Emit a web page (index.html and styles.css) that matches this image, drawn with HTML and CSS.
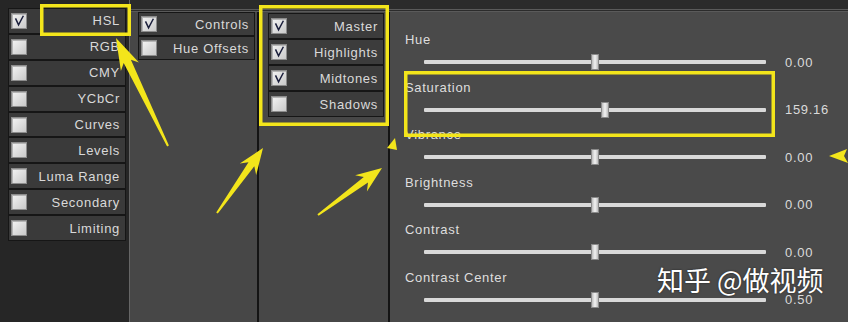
FILE: index.html
```html
<!DOCTYPE html>
<html lang="en">

<head>
  <meta charset="UTF-8">
  <meta name="viewport" content="width=device-width, initial-scale=1.0">
  <title>HSL</title>
  <link rel="stylesheet" href="styles.css">
</head>

<body>
  <div class="app">
    <div class="col col1">
      <div class="row"><span class="box checked"><svg viewBox="0 0 16 16"><path d="M4 5 L7.5 12.5 L13 2"/></svg></span><label>HSL</label></div>
      <div class="row"><span class="box"></span><label>RGB</label></div>
      <div class="row"><span class="box"></span><label>CMY</label></div>
      <div class="row"><span class="box"></span><label>YCbCr</label></div>
      <div class="row"><span class="box"></span><label>Curves</label></div>
      <div class="row"><span class="box"></span><label>Levels</label></div>
      <div class="row"><span class="box"></span><label>Luma Range</label></div>
      <div class="row"><span class="box"></span><label>Secondary</label></div>
      <div class="row"><span class="box"></span><label>Limiting</label></div>
    </div>

    <div class="main">
      <div class="topbar"></div>
      <div class="panes">
        <div class="col col2">
          <div class="row"><span class="box checked"><svg viewBox="0 0 16 16"><path d="M4 5 L7.5 12.5 L13 2"/></svg></span><label>Controls</label></div>
          <div class="row"><span class="box"></span><label>Hue Offsets</label></div>
        </div>

        <div class="col col3">
          <div class="row"><span class="box checked"><svg viewBox="0 0 16 16"><path d="M4 5 L7.5 12.5 L13 2"/></svg></span><label>Master</label></div>
          <div class="row"><span class="box checked"><svg viewBox="0 0 16 16"><path d="M4 5 L7.5 12.5 L13 2"/></svg></span><label>Highlights</label></div>
          <div class="row"><span class="box checked"><svg viewBox="0 0 16 16"><path d="M4 5 L7.5 12.5 L13 2"/></svg></span><label>Midtones</label></div>
          <div class="row"><span class="box"></span><label>Shadows</label></div>
        </div>

        <div class="col col4">
          <div class="slider">
            <div class="name">Hue</div>
            <div class="line"><div class="track"><span class="thumb" style="left: 49.7%"></span></div><span class="value">0.00</span></div>
          </div>
          <div class="slider">
            <div class="name">Saturation</div>
            <div class="line"><div class="track"><span class="thumb" style="left: 52.6%"></span></div><span class="value">159.16</span></div>
          </div>
          <div class="slider">
            <div class="name">Vibrance</div>
            <div class="line"><div class="track"><span class="thumb" style="left: 49.7%"></span></div><span class="value">0.00</span></div>
          </div>
          <div class="slider">
            <div class="name">Brightness</div>
            <div class="line"><div class="track"><span class="thumb" style="left: 49.7%"></span></div><span class="value">0.00</span></div>
          </div>
          <div class="slider">
            <div class="name">Contrast</div>
            <div class="line"><div class="track"><span class="thumb" style="left: 49.7%"></span></div><span class="value">0.00</span></div>
          </div>
          <div class="slider">
            <div class="name">Contrast Center</div>
            <div class="line"><div class="track"><span class="thumb" style="left: 49.7%"></span></div><span class="value">0.50</span></div>
          </div>
        </div>
      </div>
    </div>
  </div>

  <!-- yellow markup drawn over the screenshot -->
  <svg class="marks" viewBox="0 0 848 322">
    <rect x="41.75" y="5.75" width="87.5" height="28.5" />
    <rect x="260.75" y="6.75" width="126.5" height="117.5" />
    <rect x="405.75" y="72.75" width="367.5" height="62.5" />
    <polygon points="168.9,145.6 130.9,59.7 138.9,62.5 116,38 120.9,71.1 123.7,63.1 167.1,146.4" />
    <polygon points="217.8,213.6 254.3,166.3 256.2,175 263,148 239.8,163.4 248.5,162.3 216.2,212.4" />
    <polygon points="318.6,215.8 368,182.6 366.9,191.5 382,168 355.1,175.3 363.8,177 317.4,214.2" />
    <polygon points="387,148 395,138 397,150" />
    <polygon points="829,156 847,149 844,156 848,163" />
  </svg>

  <div class="watermark">知乎 @做视频</div>
</body>

</html>
```

FILE: styles.css
```css
:root {
  --dark-color: #262626;
  --pane-color: #474747;
  --main-color: #4a4a4a;
  --row-color: #3a3a3a;
  --text-color: #d9d9d9;
  --mark-color: #f3e51b;
}

body {
  margin: 0;
  padding: 0;
  position: relative;
  width: 848px;
  height: 322px;
  overflow: hidden;
  background-color: var(--dark-color);
  font-family: "Liberation Sans", Arial, sans-serif;
  font-size: 13px;
  letter-spacing: 0.7px;
  color: var(--text-color);
}

.app {
  display: flex;
  height: 322px;
}

.col {
  box-sizing: border-box;
  display: flex;
  flex-direction: column;
}

.col1 {
  width: 130px;
  padding: 8px 3px 0 8px;
  border-right: 1px solid #666;
}

.main {
  flex: 1;
  display: flex;
  flex-direction: column;
}

.topbar {
  height: 9px;
  background-color: #2b2b2b;
  border-bottom: 3px double #5a5a5a;
}

.panes {
  flex: 1;
  display: flex;
}

.col2 {
  width: 129px;
  padding: 0 2px 0 8px;
  background-color: var(--pane-color);
  border-right: 2px solid #141414;
}

.col3 {
  width: 131px;
  padding: 1px 4px 0 9px;
  background-color: var(--pane-color);
  border-right: 2px solid #141414;
}

.col4 {
  flex: 1;
  padding: 20px 0 0 15px;
  background-color: var(--main-color);
}

/* checkbox rows */
.row {
  box-sizing: border-box;
  display: flex;
  align-items: center;
  height: 25.9px;
  padding: 0 5px 0 2px;
  background-color: var(--row-color);
  border: 1px solid #161616;
}

.col2 .row {
  height: 24px;
  background-color: #3c3c3c;
}

.col3 .row {
  height: 26px;
  background-color: #3c3c3c;
}

.row>label {
  flex: 1;
  text-align: right;
  white-space: nowrap;
}

.box {
  box-sizing: border-box;
  width: 16px;
  height: 16px;
  border: 1px solid #8c8c8c;
  background: linear-gradient(135deg, #f4f4f4, #c9c9c9);
  box-shadow: inset 1px 1px 0 #b5b5b5;
}

.box svg {
  display: block;
  width: 14px;
  height: 14px;
}

.box path {
  fill: none;
  stroke: #1b1f3c;
  stroke-width: 1.7;
}

/* sliders */
.slider {
  height: 47.6px;
}

.name {
  height: 16px;
  line-height: 16px;
  color: #dedede;
}

.line {
  display: flex;
  align-items: center;
  height: 16px;
  margin-top: 6px;
}

.track {
  position: relative;
  width: 342px;
  height: 4px;
  margin-left: 19px;
  background-color: #d9d9d9;
  border-radius: 1px;
}

.thumb {
  position: absolute;
  top: -6px;
  width: 6px;
  height: 14px;
  margin-left: -3px;
  border: 1px solid #8a8a8a;
  background: linear-gradient(to right, #bdbdbd, #f2f2f2, #bdbdbd);
}

.value {
  margin-left: 19px;
  color: #dadada;
}

/* annotation overlay */
.marks {
  position: absolute;
  top: 0;
  left: 0;
  width: 848px;
  height: 322px;
  pointer-events: none;
}

.marks rect {
  fill: none;
  stroke: var(--mark-color);
  stroke-width: 3.5;
}

.marks polygon {
  fill: var(--mark-color);
}

.watermark {
  position: absolute;
  left: 657px;
  top: 265px;
  line-height: 30px;
  font-family: "Noto Sans CJK SC", sans-serif;
  font-size: 27px;
  letter-spacing: 0;
  color: #ffffff;
  text-shadow: 0 0 2px rgba(0, 0, 0, 0.6);
}
```
